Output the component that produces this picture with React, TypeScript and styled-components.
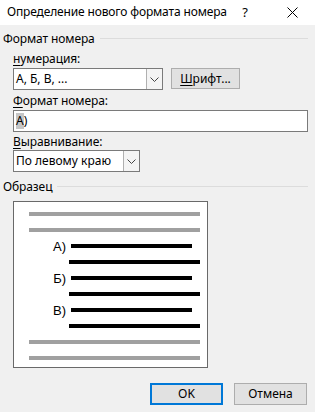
import * as React from 'react'
import styled, { createGlobalStyle } from 'styled-components'

const GlobalStyle = createGlobalStyle`
  html, body {
    margin: 0;
    padding: 0;
    background: #f0f0f0;
  }
  body {
    font-family: "Noto Sans", "Open Sans", sans-serif;
    font-size: 12px;
    color: #000;
  }
`

const previewRows = ['А)', 'Б)', 'В)']

export default function App() {
  return (
    <Dialog>
      <GlobalStyle />
      <TitleBar>
        <Title>Определение нового формата номера</Title>
        <HelpMark>?</HelpMark>
        <CloseIcon width="11" height="11" viewBox="0 0 11 11">
          <path d="M0.5 0.5 L10.5 10.5 M10.5 0.5 L0.5 10.5" stroke="#000" strokeWidth="1" fill="none" />
        </CloseIcon>
      </TitleBar>
      <Body>
        <GroupHeader>
          <span>Формат номера</span>
          <GroupLine />
        </GroupHeader>
        <FieldLabel top={4}><u>н</u>умерация:</FieldLabel>
        <Row>
          <Combo width={150}>
            <ComboText>А, Б, В, ...</ComboText>
            <ComboArrow>
              <svg width="9" height="5" viewBox="0 0 9 5">
                <path d="M0.5 0.5 L4.5 4.5 L8.5 0.5" stroke="#444" strokeWidth="1" fill="none" />
              </svg>
            </ComboArrow>
          </Combo>
          <Button width={69}><u>Ш</u>рифт...</Button>
        </Row>
        <FieldLabel top={3}><u>Ф</u>ормат номера:</FieldLabel>
        <TextBox>
          <Selected>А</Selected>)
        </TextBox>
        <FieldLabel top={2}><u>В</u>ыравнивание:</FieldLabel>
        <Combo width={127}>
          <ComboText>По левому краю</ComboText>
          <ComboArrow>
            <svg width="9" height="5" viewBox="0 0 9 5">
              <path d="M0.5 0.5 L4.5 4.5 L8.5 0.5" stroke="#444" strokeWidth="1" fill="none" />
            </svg>
          </ComboArrow>
        </Combo>
        <GroupHeader top={7}>
          <span>Образец</span>
          <GroupLine />
        </GroupHeader>
        <Preview>
          <GrayLine />
          <GrayLine />
          {previewRows.map((r) => (
            <React.Fragment key={r}>
              <NumberRow>
                <NumberLabel>{r}</NumberLabel>
                <BlackLine width={121} />
              </NumberRow>
              <ContLine />
            </React.Fragment>
          ))}
          <GrayLine />
          <GrayLine />
        </Preview>
        <Footer>
          <Button width={73} height={22} primary>OK</Button>
          <Button width={73} height={22}>Отмена</Button>
        </Footer>
      </Body>
    </Dialog>
  )
}

const Dialog = styled.div`
  width: 315px;
  height: 412px;
  overflow: hidden;
  background: #f0f0f0;
`
const TitleBar = styled.div`
  height: 25px;
  background: #fff;
  display: flex;
  align-items: center;
  padding-left: 7px;
`
const Title = styled.div`
  flex: 1;
  font-size: 12px;
  line-height: 16px;
  margin-top: -1px;
  letter-spacing: -0.15px;
`
const HelpMark = styled.div`
  font-size: 13px;
  margin-right: 39px;
  margin-top: -2px;
`
const CloseIcon = styled.svg`
  margin-right: 17px;
  margin-top: -1px;
`
const Body = styled.div`
  display: flex;
  flex-direction: column;
  padding: 0 7px 0 13px;
`
const GroupHeader = styled.div<{ top?: number }>`
  display: flex;
  align-items: center;
  gap: 5px;
  margin: ${({ top }) => (top ?? 6)}px 0 0 -10px;
  height: 16px;
  line-height: 16px;
  letter-spacing: -0.1px;
`
const GroupLine = styled.div`
  flex: 1;
  height: 1px;
  background: #dcdcdc;
  margin-top: -2px;
`
const FieldLabel = styled.div<{ top: number }>`
  height: 16px;
  line-height: 16px;
  margin-top: ${({ top }) => top}px;
  letter-spacing: -0.1px;
  & > u {
    text-underline-offset: 2px;
  }
`
const Row = styled.div`
  display: flex;
  align-items: flex-start;
  gap: 8px;
  margin-top: 1px;
`
const Combo = styled.div<{ width: number }>`
  width: ${({ width }) => width}px;
  height: 22px;
  box-sizing: border-box;
  border: 1px solid #7a7a7a;
  background: #fff;
  display: flex;
  align-items: stretch;
`
const ComboText = styled.div`
  flex: 1;
  line-height: 20px;
  padding-left: 2px;
  white-space: nowrap;
  overflow: hidden;
`
const ComboArrow = styled.div`
  width: 16px;
  box-sizing: border-box;
  border: 1px solid #b0b0b0;
  border-right: none;
  border-top: none;
  border-bottom: none;
  background: #f4f4f4;
  display: flex;
  align-items: center;
  justify-content: center;
`
const Button = styled.div<{ width: number; height?: number; primary?: boolean }>`
  width: ${({ width }) => width}px;
  height: ${({ height }) => height ?? 21}px;
  box-sizing: border-box;
  background: #e1e1e1;
  border: ${({ primary }) => (primary ? '2px solid #0078d7' : '1px solid #adadad')};
  display: flex;
  align-items: center;
  justify-content: center;
  line-height: 16px;
  & > u {
    text-underline-offset: 2px;
  }
`
const TextBox = styled.div`
  height: 22px;
  box-sizing: border-box;
  border: 1px solid #7a7a7a;
  background: #fff;
  margin-top: 1px;
  padding-left: 2px;
  line-height: 20px;
  display: flex;
  align-items: center;
`
const Selected = styled.span`
  background: #c6c6c6;
  line-height: 16px;
`
const Preview = styled.div`
  margin-top: 6px;
  width: 195px;
  height: 167px;
  box-sizing: border-box;
  border: 1px solid #696969;
  background: #fff;
  display: flex;
  flex-direction: column;
  gap: 12px;
  padding: 10px 0 0 0;
`
const GrayLine = styled.div`
  height: 4px;
  width: 171px;
  margin-left: 15px;
  background: #a0a0a0;
  flex-shrink: 0;
`
const NumberRow = styled.div`
  height: 4px;
  display: flex;
  align-items: center;
  gap: 5px;
  flex-shrink: 0;
`
const NumberLabel = styled.div`
  width: 52px;
  text-align: right;
  font-family: "Liberation Sans", Arial, sans-serif;
  font-size: 13px;
  line-height: 4px;
  margin-top: 1px;
`
const BlackLine = styled.div<{ width: number }>`
  height: 4px;
  width: ${({ width }) => width}px;
  background: #000;
`
const ContLine = styled.div`
  height: 4px;
  width: 131px;
  margin-left: 55px;
  background: #000;
  flex-shrink: 0;
`
const Footer = styled.div`
  display: flex;
  justify-content: flex-end;
  gap: 11px;
  margin-top: 15px;
  padding-right: 1px;
`
